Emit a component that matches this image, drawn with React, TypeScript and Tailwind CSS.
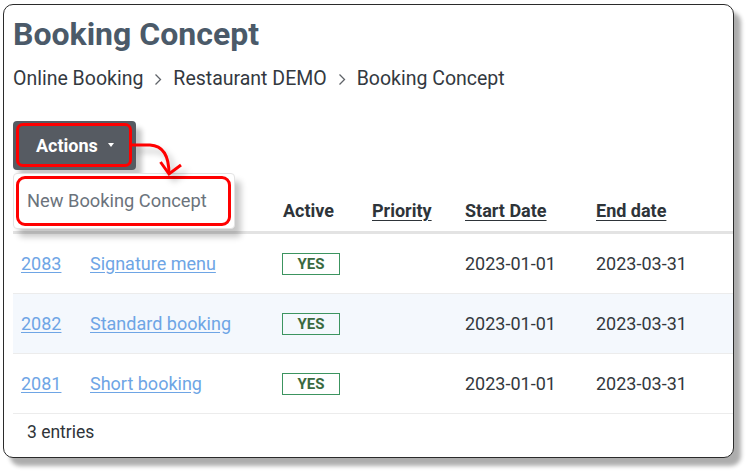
import React from "react";

const FONT = { fontFamily: "Roboto, 'Liberation Sans', Arial, sans-serif" };

type Row = { id: string; name: string; start: string; end: string };

const rows: Row[] = [
  { id: "2083", name: "Signature menu", start: "2023-01-01", end: "2023-03-31" },
  { id: "2082", name: "Standard booking", start: "2023-01-01", end: "2023-03-31" },
  { id: "2081", name: "Short booking", start: "2023-01-01", end: "2023-03-31" },
];

const COLS = "grid grid-cols-[69px_193px_89px_93px_131px_1fr]";

function Chevron() {
  return (
    <svg width="8" height="13" viewBox="0 0 8 13" className="mx-[11px] shrink-0">
      <path d="M1.5 1.5 L6.5 6.5 L1.5 11.5" fill="none" stroke="#5f6368" strokeWidth="1.3" />
    </svg>
  );
}

export default function App() {
  return (
    <div className="w-[752px] h-[474px] bg-white relative" style={FONT}>
      <div className="absolute left-[3px] top-[4px] w-[731px] h-[454px] rounded-[10px] bg-white border-[1.5px] border-[#2b2b2b] shadow-[7px_8px_4px_rgba(0,0,0,0.32)] overflow-hidden">
        <div className="pl-[9px] pt-[10px]">
          <h1 className="text-[32px] leading-[38px] font-bold text-[#4b5a69]">Booking Concept</h1>

          <div className="mt-[12px] flex items-center text-[19.5px] leading-[28px] text-[#33393f]">
            <span>Online Booking</span>
            <Chevron />
            <span>Restaurant DEMO</span>
            <Chevron />
            <span>Booking Concept</span>
          </div>

          {/* actions + open dropdown */}
          <div className="relative mt-[28px] w-[123px] h-[49px]">
            <button className="relative w-full h-full rounded-[4px] bg-[#565b62] text-white text-[18px] font-bold flex items-center pl-[23px] shadow-[6px_7px_5px_rgba(0,0,0,0.22)]">
              Actions
              <span className="ml-[10px] mt-[-2px] w-0 h-0 border-l-[3.5px] border-r-[3.5px] border-t-[4px] border-l-transparent border-r-transparent border-t-white" />
              <span className="absolute left-[3px] top-[2px] right-[4px] bottom-[3px] rounded-[7px] border-[3px] border-[#ff0000]" />
            </button>

            <div className="absolute z-10 left-0 top-[52px] w-[222px] h-[56px] bg-white border border-[#e3e3e3] rounded-[4px] shadow-[6px_8px_6px_rgba(0,0,0,0.22)]">
              <div className="pl-[13px] pt-[15px] text-[18.3px] leading-[24px] text-[#6b737c]">New Booking Concept</div>
              <span className="absolute left-[2px] top-[2px] right-[3px] bottom-[2px] rounded-[9px] border-[3px] border-[#ff0000]" />
            </div>

            <svg
              className="absolute z-20 left-[119px] top-[10px] overflow-visible"
              width="60"
              height="50"
              viewBox="0 0 60 50"
              style={{ filter: "drop-shadow(5px 6px 3px rgba(0,0,0,0.25))" }}
            >
              <path d="M0 14 L18 14 Q37 15 37 43" fill="none" stroke="#ff0000" strokeWidth="3" />
              <path d="M28.5 31 L37 43 L49 34" fill="none" stroke="#ff0000" strokeWidth="3" strokeLinejoin="miter" />
            </svg>
          </div>

          {/* table */}
          <div className="mt-[21px]">
            <div className={`${COLS} h-[43px] items-end pb-[8px] border-b-[3px] border-[#e3e3e3] text-[18px] leading-[24px] font-bold text-[#2e3439]`}>
              <div />
              <div />
              <div className="pl-[8px]">Active</div>
              <div className="pl-[8px] underline underline-offset-[3px]">Priority</div>
              <div className="pl-[8px] underline underline-offset-[3px]">Start Date</div>
              <div className="pl-[8px] underline underline-offset-[3px]">End date</div>
            </div>

            {rows.map((r, i) => (
              <div
                key={r.id}
                className={`${COLS} h-[60px] items-center border-b border-[#ececec] text-[18px] leading-[24px] ${i === 1 ? "bg-[#f4f8fd]" : "bg-white"}`}
              >
                <div className="pl-[8px]">
                  <a href="#" className="text-[#6ea5e5] underline underline-offset-[2px]">{r.id}</a>
                </div>
                <div className="pl-[8px]">
                  <a href="#" className="text-[#6ea5e5] underline underline-offset-[2px]">{r.name}</a>
                </div>
                <div className="pl-[7px]">
                  <span className="flex items-center justify-center w-[58px] h-[22px] border-[1.5px] border-[#3c9460] text-[15px] font-bold text-[#3a6a40]">
                    YES
                  </span>
                </div>
                <div />
                <div className="pl-[8px] text-[#33383d]">{r.start}</div>
                <div className="pl-[8px] text-[#33383d]">{r.end}</div>
              </div>
            ))}

            <div className="pl-[14px] pt-[6px] text-[17.5px] leading-[24px] text-[#2f3439]">3 entries</div>
          </div>
        </div>
      </div>
    </div>
  );
}
